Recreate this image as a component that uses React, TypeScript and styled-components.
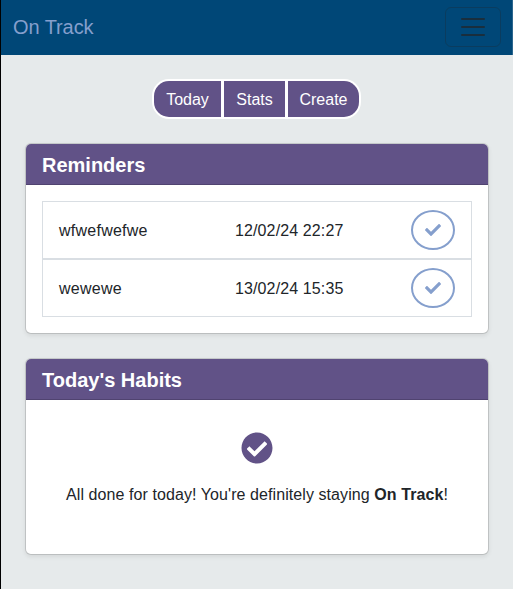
import React from "react";
import styled, { createGlobalStyle } from "styled-components";
import { FaCheck, FaCheckCircle } from "react-icons/fa";

const color = {
  navy: "#004777",
  page: "#e6eaeb",
  purple: "#615287",
  blue: "#859fcd",
  text: "#212529",
  line: "#d9dee3",
};

const GlobalStyle = createGlobalStyle`
  *, *::before, *::after { box-sizing: border-box; }
  body {
    margin: 0;
    background: ${color.page};
    color: ${color.text};
    font: 16px/24px "Liberation Sans", Arial, sans-serif;
  }
  button { font: inherit; cursor: pointer; }
`;

const Page = styled.div`
  min-height: 589px;
  border-left: 1px solid #000;
`;

const Navbar = styled.nav`
  display: flex;
  align-items: center;
  justify-content: space-between;
  height: 55px;
  padding: 0 11px 1px 12px;
  background: ${color.navy};
  border-right: 1px solid #2b668e;
`;

const Brand = styled.a`
  color: ${color.blue};
  font-size: 20px;
  line-height: 30px;
  letter-spacing: -0.08px;
`;

const Toggler = styled.button`
  display: flex;
  width: 56px;
  height: 40px;
  padding: 3px 12px;
  background: transparent;
  border: 1px solid rgba(33, 37, 41, 0.3);
  border-radius: 6px;
`;

const Main = styled.main`
  display: flex;
  flex-direction: column;
  gap: 24px;
  padding: 24px 24px 34px;
`;

const ButtonGroup = styled.div`
  display: flex;
  align-self: center;
  gap: 3px;
  height: 40px;
  margin-right: 1px;
  padding: 2px;
  background: #fff;
  border-radius: 17px;
  overflow: hidden;
`;

const GroupButton = styled.button<{ $width: number }>`
  width: ${(p) => p.$width}px;
  padding: 2px 0 0;
  border: 0;
  background: ${color.purple};
  color: #fff;
  white-space: nowrap;
  &:first-child { border-radius: 15px 0 0 15px; }
  &:last-child { border-radius: 0 15px 15px 0; }
`;

const Card = styled.section<{ $height: number }>`
  height: ${(p) => p.$height}px;
  background: #fff;
  background-clip: padding-box;
  border: 1px solid rgba(0, 0, 0, 0.13);
  border-radius: 6px;
  box-shadow: 0 2px 4px rgba(0, 0, 0, 0.075);
`;

const CardHeader = styled.h2`
  height: 41px;
  margin: 0;
  padding: 9px 16px 0;
  background: ${color.purple};
  border-bottom: 1px solid #504370;
  border-radius: 5px 5px 0 0;
  color: #fff;
  font-size: 20px;
  line-height: 24px;
`;

const ReminderList = styled.div`
  padding: 16px;
`;

const Reminder = styled.div`
  display: grid;
  grid-template-columns: 176px 1fr 44px;
  align-items: center;
  height: 58px;
  padding: 0 16px;
  border: 1px solid ${color.line};
`;

const ReminderText = styled.span<{ $spacing: number }>`
  padding-top: 2px;
  letter-spacing: ${(p) => p.$spacing}px;
`;

const DoneButton = styled.button`
  display: flex;
  align-items: center;
  justify-content: center;
  width: 44px;
  height: 40px;
  padding: 0;
  background: transparent;
  border: 2px solid ${color.blue};
  border-radius: 50%;
  color: ${color.blue};
`;

const AllDone = styled.div`
  display: flex;
  flex-direction: column;
  align-items: center;
  padding-top: 32px;
  svg { color: ${color.purple}; }
`;

const Message = styled.p`
  margin: 19px 0 0;
  letter-spacing: 0.08px;
  white-space: nowrap;
`;

const tabs = [
  { label: "Today", width: 67 },
  { label: "Stats", width: 61 },
  { label: "Create", width: 71 },
];

const reminders = [
  { name: "wfwefwefwe", due: "12/02/24 22:27" },
  { name: "wewewe", due: "13/02/24 15:35" },
];

export default function App() {
  return (
    <Page>
      <GlobalStyle />
      <Navbar>
        <Brand>On Track</Brand>
        <Toggler aria-label="Toggle navigation">
          <svg width="30" height="30" viewBox="0 0 30 30">
            <path
              d="M4 8h22M4 16h22M4 24h22"
              fill="none"
              stroke="rgba(33,37,41,0.75)"
              strokeLinecap="round"
              strokeMiterlimit="10"
              strokeWidth="2"
            />
          </svg>
        </Toggler>
      </Navbar>
      <Main>
        <ButtonGroup>
          {tabs.map((t) => (
            <GroupButton key={t.label} $width={t.width}>{t.label}</GroupButton>
          ))}
        </ButtonGroup>
        <Card $height={191}>
          <CardHeader>Reminders</CardHeader>
          <ReminderList>
            {reminders.map((r) => (
              <Reminder key={r.name}>
                <ReminderText $spacing={0.25}>{r.name}</ReminderText>
                <ReminderText $spacing={0.12}>{r.due}</ReminderText>
                <DoneButton aria-label="Mark done"><FaCheck size={16} /></DoneButton>
              </Reminder>
            ))}
          </ReminderList>
        </Card>
        <Card $height={197}>
          <CardHeader>Today's Habits</CardHeader>
          <AllDone>
            <FaCheckCircle size={32} />
            <Message>
              All done for today! You're definitely staying <strong>On Track</strong>!
            </Message>
          </AllDone>
        </Card>
      </Main>
    </Page>
  );
}
